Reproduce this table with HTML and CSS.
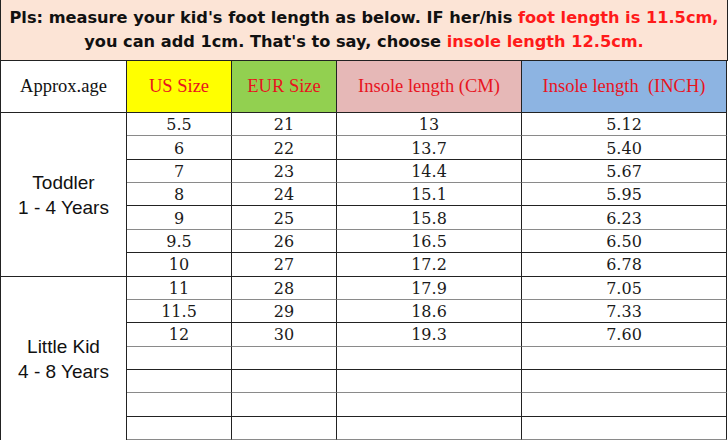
FILE: index.html
```html
<!DOCTYPE html>
<html>
<head>
<meta charset="utf-8">
<link rel="stylesheet" href="styles.css">
</head>
<body>
<div class="chart">
  <div class="banner">
    <p>Pls: measure your kid's foot length as below. IF her/his <span class="hl">foot length is 11.5cm,</span></p>
    <p>you can add 1cm. That's to say, choose <span class="hl">insole length 12.5cm.</span></p>
  </div>
  <div class="grid">
    <div class="cell head age">Approx.age</div>
    <div class="cell head us">US Size</div>
    <div class="cell head eur">EUR Size</div>
    <div class="cell head cm">Insole length (CM)</div>
    <div class="cell head inch">Insole length&nbsp; (INCH)</div>

    <div class="cell group g1">Toddler<br>1 - 4 Years</div>
    <div class="cell num l">5.5</div><div class="cell num l">21</div><div class="cell num l">13</div><div class="cell num l">5.12</div>
    <div class="cell num d">6</div><div class="cell num d">22</div><div class="cell num d">13.7</div><div class="cell num d">5.40</div>
    <div class="cell num l">7</div><div class="cell num l">23</div><div class="cell num l">14.4</div><div class="cell num l">5.67</div>
    <div class="cell num d">8</div><div class="cell num d">24</div><div class="cell num d">15.1</div><div class="cell num d">5.95</div>
    <div class="cell num l">9</div><div class="cell num l">25</div><div class="cell num l">15.8</div><div class="cell num l">6.23</div>
    <div class="cell num d">9.5</div><div class="cell num d">26</div><div class="cell num d">16.5</div><div class="cell num d">6.50</div>
    <div class="cell num d">10</div><div class="cell num d">27</div><div class="cell num d">17.2</div><div class="cell num d">6.78</div>

    <div class="cell group g2">Little Kid<br>4 - 8 Years</div>
    <div class="cell num l">11</div><div class="cell num l">28</div><div class="cell num l">17.9</div><div class="cell num l">7.05</div>
    <div class="cell num d">11.5</div><div class="cell num d">29</div><div class="cell num d">18.6</div><div class="cell num d">7.33</div>
    <div class="cell num l">12</div><div class="cell num l">30</div><div class="cell num l">19.3</div><div class="cell num l">7.60</div>
    <div class="cell num d"></div><div class="cell num d"></div><div class="cell num d"></div><div class="cell num d"></div>
    <div class="cell num l"></div><div class="cell num l"></div><div class="cell num l"></div><div class="cell num l"></div>
    <div class="cell num d"></div><div class="cell num d"></div><div class="cell num d"></div><div class="cell num d"></div>
    <div class="cell num l"></div><div class="cell num l"></div><div class="cell num l"></div><div class="cell num l"></div>
  </div>
</div>
</body>
</html>
```

FILE: styles.css
```css
html, body {
  margin: 0;
  padding: 0;
  background: #ffffff;
}

.chart {
  width: 728px;
  height: 440px;
  overflow: hidden;
  border-left: 1px solid #222;
  box-sizing: border-box;
}

.banner {
  height: 61px;
  width: 727px;
  box-sizing: border-box;
  background: #fce4d6;
  border-bottom: 1px solid #222;
  border-right: 1px solid #222;
  display: flex;
  flex-direction: column;
  justify-content: center;
  align-items: center;
  font-family: "DejaVu Sans", Verdana, sans-serif;
  font-weight: bold;
  font-size: 16.2px;
  color: #111;
  padding-bottom: 1px;
}

.banner p {
  margin: 0;
  line-height: 24px;
  white-space: nowrap;
}

.hl {
  color: #ff1a1a;
}

.grid {
  display: grid;
  grid-template-columns: 126px 105px 105px 185px 205px;
  grid-template-rows: 52px repeat(14, 23.36px);
}

.cell {
  box-sizing: border-box;
  border-right: 1px solid #222;
  display: flex;
  align-items: center;
  justify-content: center;
  white-space: nowrap;
}

.head {
  border-bottom: 1px solid #222;
  font-family: "Liberation Serif", "Times New Roman", serif;
  font-size: 18.5px;
  color: #e8141e;
}

.head.age { color: #111; background: #fff; }
.head.us { background: #ffff00; }
.head.eur { background: #92d050; }
.head.cm { background: #e6b8b7; }
.head.inch { background: #8db4e2; }

.group {
  grid-row: span 7;
  flex-direction: column;
  font-family: "Liberation Sans", Arial, sans-serif;
  font-size: 19px;
  color: #111;
  line-height: 25px;
  border-bottom: 1px solid #222;
  text-align: center;
  padding-top: 2px;
}

.group.g2 { border-bottom: none; }

.num {
  font-family: "DejaVu Serif", Cambria, serif;
  font-size: 16px;
  color: #1b1b1b;
  padding-top: 1px;
}

.num.l { border-bottom: 1px solid #8a8a8a; }
.num.d { border-bottom: 1px solid #222; }
```
